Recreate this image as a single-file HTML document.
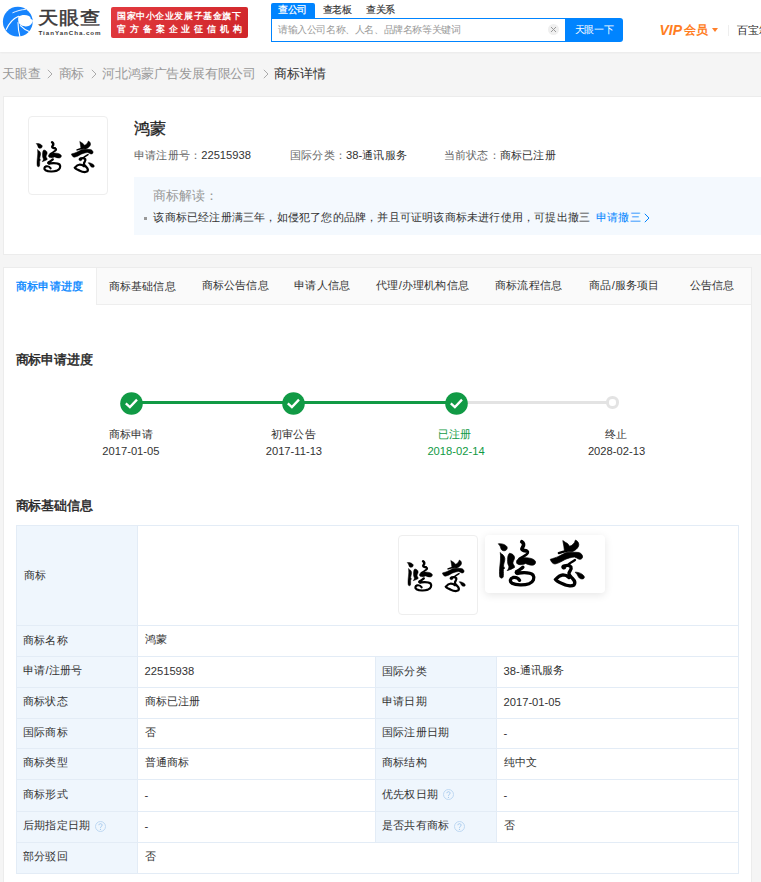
<!DOCTYPE html>
<html><head><meta charset="utf-8">
<style>
*{margin:0;padding:0;box-sizing:border-box}
html,body{width:761px;height:882px;overflow:hidden;background:#f5f5f5;font-family:"Liberation Sans",sans-serif;color:#333}
.abs{position:absolute}
#hdr{position:absolute;left:0;top:0;width:761px;height:52px;background:#fff;box-shadow:0 1px 2px rgba(0,0,0,.05)}
.t{position:absolute;white-space:nowrap;line-height:1}
</style></head><body>
<svg width="0" height="0" style="position:absolute">
<defs><g id="cal">
<g fill="#000" stroke="#000" stroke-width="0.7" stroke-linejoin="round">
<path d="M498.3,543.8 C501,543.4 505.5,544.2 507,546.8 C507.8,549 506.3,550.8 504,550.8 C501.8,550.7 501,549.3 500.8,548 C500.5,546.5 499.5,545 498.3,543.8Z"/>
<path d="M500.6,553.6 C502.5,554 504.6,556 504.8,558.5 C505,561 503.6,563.5 503.5,566 C503.5,567 504.3,567.5 504.7,568 L503.4,569.5 C503.3,572 503.7,575 503.2,577 C502.6,578.5 500.5,578.5 499.8,577 C499.2,574 499.5,569 500,565 C500.5,561 500.8,557 500.3,552.5Z"/>
<path d="M509.5,553.2 C512,553.5 514.8,555.2 514.5,558 C514.2,560.5 512.5,561.5 513,563.5 C513.5,565 515,566 514.5,567.5 C512.5,568.8 509.5,570 507.2,570.6 C508.5,569 509.5,567 508.5,565.5 C507.3,563.5 507.5,560 507.8,557 C508,555.5 508.5,554 509.5,553.2Z"/>
<path d="M516.5,561.5 C517,558.5 521,557.5 525,557.7 C529,557.8 534,558.5 535.5,561.5 C536,564 534,565.5 531.5,565.2 C529,565 527,564 525.5,563.5 C524,564.5 520.5,565 518.5,564.5 C517,564 516.3,563 516.5,561.5Z"/>
<circle cx="517.5" cy="572.3" r="2.4"/>
<circle cx="563.8" cy="567" r="2.2"/>
<path d="M562.8,540.6 C564.5,541.8 566,542.8 567.5,543.5 C568.3,544.2 568.8,545.3 569.5,546.3 C572,545.8 574.5,543.5 575.5,540 C578.2,541.2 579.3,543.8 578.6,546 C577.5,548.8 575,550.6 572,551.8 L564.5,551.5 C564.2,547.8 563.6,544.2 562.8,540.6Z"/>
<path d="M550.3,559.3 C553,558.5 556,557.5 558,556.7 C561,555.3 564,553.5 566.4,552.6 C570,552.2 575,552 578.8,552.5 C581.5,553.3 583,555.5 582.5,557.5 C582,559 580.5,559.5 579,559.2 C577.5,558.5 576,557.5 574.5,557 C571,557.2 567.5,558.5 565,559.5 C561.5,561.5 558,563.5 555,564 C552.5,564 551,561.5 550.3,559.3Z"/>
<path d="M575.2,572.2 C577.5,572 580.5,573 582.5,574.5 C584.5,576 585,577.8 583.5,578.7 C581.5,579.5 579.5,578.5 578.5,577 C577.8,575.5 576.8,573.5 575.2,572.2Z"/>
</g>
<g fill="none" stroke="#000" stroke-linecap="round">
<path d="M521.8,541.8 C523.5,543 524.5,545 522.5,547.5 C521,549.5 523,550.5 526,550.8" stroke-width="3.7"/>
<path d="M526,550.8 C528.5,551 528.5,553 526.5,554.5 C524.5,556 522,557 519.5,558.8" stroke-width="2.6"/>
<path d="M522.9,567.2 C521,569 518,570.5 516.5,572 C516,573 517,573.2 519,573 C524,572.5 530,572 533,575 C535,578 533.5,582 529,583.8 C524,585.5 516,585.2 512,583.2 C509.5,581.5 510,578.5 513,577.5 C516,577 518.5,578.5 519.6,580.3" stroke-width="3.3"/>
<path d="M558.8,553.1 C561,552.3 563.5,551.5 566.4,551.1" stroke-width="2.2"/>
<path d="M575,560 C572.5,561.5 570,563 568.4,564.6" stroke-width="2.2"/>
<path d="M563.5,566.8 C565.5,564.8 569.5,565 571,567 C572,569 569.5,571 569,573 C568.7,575 570.5,576.5 572.5,578.5 C574.5,580.5 575.5,583 574,585 C571.5,586.5 566,585.5 562,583.5 C558.5,582 556,580.5 555.5,579.5 C557.5,577 560.5,575 563,574.8 C565.5,574.8 567.5,576 569,577.5" stroke-width="3.3"/>
</g>
</g></defs>
</svg>
<div id="hdr"></div>
<svg class="abs" style="left:0px;top:0px" width="40" height="40" viewBox="0 0 40 40">
<circle cx="17.8" cy="21.7" r="14.9" fill="#1784fd"/>
<path d="M18.4,16.6 C21,14.8 25.5,14.2 29,16 C30.3,16.8 30.8,17.8 30.5,18.6 L33,20.6 C32.4,24.2 29.5,26.6 25.5,26.4 C23,26.2 21,25.4 20,24.6 C18.2,23 17.8,20 18.4,16.6Z" fill="#fff"/>
<g fill="none" stroke="#fff" stroke-linecap="round">
<path d="M6.2,29.6 C9,23.5 13,18.5 18.6,16.3" stroke-width="1.1"/>
<path d="M18,22.5 C18,28 18.8,32.5 20,36.8" stroke-width="1.1"/>
<path d="M20.4,25.6 C23,28.3 26,30.3 29.2,31.4" stroke-width="1.1"/>
<path d="M12.8,12.7 C17,10.9 21,9.7 25.5,9.4" stroke-width="0.9"/>
</g>
</svg>
<div class="abs" style="left:111px;top:7px;width:137px;height:31px;background:linear-gradient(135deg,#e23a3f,#cf2529);border-radius:2px"></div>
<div class="abs" style="left:271px;top:3px;width:44px;height:16px;background:#0084ff;border-radius:2px 2px 0 0"></div>
<div class="abs" style="left:271px;top:18px;width:296px;height:24px;border:1.5px solid #0084ff;border-right:0;background:#fff"></div>
<div class="abs" style="left:548px;top:24px;width:11px;height:11px;border-radius:50%;background:#efefef"></div>
<svg class="abs" style="left:550px;top:26px" width="7" height="7" viewBox="0 0 7 7"><path d="M1 1L6 6M6 1L1 6" stroke="#999" stroke-width="1"/></svg>
<div class="abs" style="left:565px;top:18px;width:58px;height:24px;background:#0084ff;border-radius:0 3px 3px 0"></div>
<div class="abs" style="left:712px;top:28px;width:0;height:0;border-left:3.5px solid transparent;border-right:3.5px solid transparent;border-top:4.5px solid #ff7f2a"></div>
<div class="abs" style="left:728px;top:25px;width:1px;height:11px;background:#eee"></div>
<div class="abs" style="left:3px;top:96px;width:758px;height:159px;background:#fff;border:1px solid #ececec;border-right:0"></div>
<div class="abs" style="left:28px;top:116px;width:80px;height:79px;border:1px solid #eee;border-radius:4px;background:#fff"></div>
<svg class="abs" style="left:33.84px;top:139.28px;overflow:visible" width="62.10" height="34.43" viewBox="495 537 92 51"><use href="#cal"/></svg>
<div class="abs" style="left:134px;top:177px;width:627px;height:58px;background:#f4f9fe"></div>
<div class="abs" style="left:144px;top:217px;width:3px;height:3px;background:#999"></div>
<svg class="abs" style="left:644px;top:213px" width="6" height="10" viewBox="0 0 6 10"><path d="M0.8 0.8 L5 5 L0.8 9.2" fill="none" stroke="#0084ff" stroke-width="1"/></svg>
<div class="abs" style="left:3px;top:267px;width:749px;height:615px;background:#fff;border:1px solid #ececec;border-bottom:0"></div>
<div class="abs" style="left:4px;top:268px;width:747px;height:37px;background:#fafafa;border-bottom:1px solid #eee"></div>
<div class="abs" style="left:4px;top:268px;width:93px;height:37px;background:#fff;border-right:1px solid #eee"></div>
<div class="abs" style="left:131px;top:401px;width:325px;height:3px;background:#119a45"></div>
<div class="abs" style="left:456px;top:401px;width:152px;height:3px;background:#e3e3e3"></div>
<svg class="abs" style="left:119.80000000000001px;top:392.3px" width="23" height="23" viewBox="0 0 23 23"><circle cx="11.5" cy="11.5" r="11.3" fill="#119a45"/><path d="M5.8 11.3 L9.9 15.1 L17 7.6" fill="none" stroke="#fff" stroke-width="2.3"/></svg>
<svg class="abs" style="left:281.9px;top:392.3px" width="23" height="23" viewBox="0 0 23 23"><circle cx="11.5" cy="11.5" r="11.3" fill="#119a45"/><path d="M5.8 11.3 L9.9 15.1 L17 7.6" fill="none" stroke="#fff" stroke-width="2.3"/></svg>
<svg class="abs" style="left:444.5px;top:392.3px" width="23" height="23" viewBox="0 0 23 23"><circle cx="11.5" cy="11.5" r="11.3" fill="#119a45"/><path d="M5.8 11.3 L9.9 15.1 L17 7.6" fill="none" stroke="#fff" stroke-width="2.3"/></svg>
<div class="abs" style="left:606.1999999999999px;top:396.2px;width:12.4px;height:12.4px;border-radius:50%;border:3px solid #e3e3e3;background:#fff"></div>
<div class="abs" style="left:16px;top:525px;width:723px;height:349px;border:1px solid #e3ecf6;background:#fff"></div>
<div class="abs" style="left:17px;top:526px;width:121px;height:347px;background:#eff6fd"></div>
<div class="abs" style="left:137px;top:525px;width:1px;height:349px;background:#e3ecf6"></div>
<div class="abs" style="left:398px;top:535px;width:80px;height:80px;border:1px solid #eee;border-radius:4px;background:#fff"></div>
<svg class="abs" style="left:404.64px;top:557.77px;overflow:visible" width="62.10" height="34.43" viewBox="495 537 92 51"><use href="#cal"/></svg>
<div class="abs" style="left:485px;top:535px;width:120px;height:58px;border-radius:4px;background:#fff;box-shadow:0 2px 8px rgba(0,0,0,.10)"></div>
<svg class="abs" style="left:495.00px;top:537.00px;overflow:visible" width="92.00" height="51.00" viewBox="495 537 92 51"><use href="#cal"/></svg>
<div class="abs" style="left:16px;top:625px;width:723px;height:1px;background:#e3ecf6"></div>
<div class="abs" style="left:16px;top:656px;width:723px;height:1px;background:#e3ecf6"></div>
<div class="abs" style="left:375px;top:657px;width:122px;height:30px;background:#eff6fd;border-left:1px solid #e3ecf6;border-right:1px solid #e3ecf6"></div>
<div class="abs" style="left:16px;top:687px;width:723px;height:1px;background:#e3ecf6"></div>
<div class="abs" style="left:375px;top:688px;width:122px;height:30px;background:#eff6fd;border-left:1px solid #e3ecf6;border-right:1px solid #e3ecf6"></div>
<div class="abs" style="left:16px;top:718px;width:723px;height:1px;background:#e3ecf6"></div>
<div class="abs" style="left:375px;top:719px;width:122px;height:29px;background:#eff6fd;border-left:1px solid #e3ecf6;border-right:1px solid #e3ecf6"></div>
<div class="abs" style="left:16px;top:748px;width:723px;height:1px;background:#e3ecf6"></div>
<div class="abs" style="left:375px;top:749px;width:122px;height:30px;background:#eff6fd;border-left:1px solid #e3ecf6;border-right:1px solid #e3ecf6"></div>
<div class="abs" style="left:16px;top:779px;width:723px;height:1px;background:#e3ecf6"></div>
<div class="abs" style="left:375px;top:780px;width:122px;height:31px;background:#eff6fd;border-left:1px solid #e3ecf6;border-right:1px solid #e3ecf6"></div>
<div class="abs" style="left:16px;top:811px;width:723px;height:1px;background:#e3ecf6"></div>
<div class="abs" style="left:375px;top:812px;width:122px;height:30px;background:#eff6fd;border-left:1px solid #e3ecf6;border-right:1px solid #e3ecf6"></div>
<div class="abs" style="left:16px;top:842px;width:723px;height:1px;background:#e3ecf6"></div>
<div class="t" id="logo" style="left:37.50px;top:8.60px;font-size:20.50px;color:#3a3637;-webkit-text-stroke:0.5px #3a3637;;transform:scaleY(0.88);transform-origin:0 0;letter-spacing:0.000px">天眼查</div>
<div class="t" id="logo2" style="left:38.50px;top:29.50px;font-size:6.20px;color:#3a3637;font-weight:bold;;letter-spacing:1.150px"><span style="letter-spacing:0.950px;position:relative;top:0px">TianYanCha.com</span></div>
<div class="t" id="red1" style="left:117.00px;top:11.60px;font-size:9.20px;color:#fff;font-weight:bold;;letter-spacing:0.580px">国家中小企业发展子基金旗下</div>
<div class="t" id="red2" style="left:117.00px;top:25.15px;font-size:9.20px;color:#fff;font-weight:bold;;letter-spacing:3.900px">官方备案企业征信机构</div>
<div class="t" id="tab1" style="left:278.00px;top:4.50px;font-size:9.60px;color:#fff;-webkit-text-stroke:0.25px #fff;letter-spacing:-0.400px">查公司</div>
<div class="t" id="tab2" style="left:322.50px;top:4.90px;font-size:9.60px;color:#333;-webkit-text-stroke:0.15px #333;letter-spacing:-0.400px">查老板</div>
<div class="t" id="tab3" style="left:366.00px;top:4.90px;font-size:9.60px;color:#333;-webkit-text-stroke:0.15px #333;letter-spacing:-0.400px">查关系</div>
<div class="t" id="ph" style="left:278.00px;top:24.80px;font-size:9.60px;color:#999;letter-spacing:-0.400px">请输入公司名称、人名、品牌名称等关键词</div>
<div class="t" id="btn" style="left:574.50px;top:24.50px;font-size:10.00px;color:#fff;letter-spacing:-0.3px">天眼一下</div>
<div class="t" id="vip" style="left:659.50px;top:22.15px;font-size:11.60px;color:#ff7d22;font-weight:bold;letter-spacing:-0.400px"><span style="font-style:italic;font-size:14px;letter-spacing:-0.3px"><span style="letter-spacing:0.000px;position:relative;top:1.2px">VIP</span></span><span style="margin-left:2px">会员</span></div>
<div class="t" id="bao" style="left:737.00px;top:25.00px;font-size:11.20px;color:#222;letter-spacing:0.200px">百宝箱</div>
<div class="t" id="bc" style="left:2.10px;top:68.00px;font-size:12.80px;color:#999;letter-spacing:-0.200px">天眼查<svg width="6" height="10" viewBox="0 0 6 10" style="margin:0 5.7px 0 6.5px;vertical-align:-1px"><path d="M0.8 0.8 L5 5 L0.8 9.2" fill="none" stroke="#aaa" stroke-width="1"/></svg>商标<svg width="6" height="10" viewBox="0 0 6 10" style="margin:0 5.7px 0 6.5px;vertical-align:-1px"><path d="M0.8 0.8 L5 5 L0.8 9.2" fill="none" stroke="#aaa" stroke-width="1"/></svg>河北鸿蒙广告发展有限公司<svg width="6" height="10" viewBox="0 0 6 10" style="margin:0 5.7px 0 6.5px;vertical-align:-1px"><path d="M0.8 0.8 L5 5 L0.8 9.2" fill="none" stroke="#aaa" stroke-width="1"/></svg><span style="color:#333">商标详情</span></div>
<div class="t" id="title" style="left:134.00px;top:120.70px;font-size:16.00px;color:#222;-webkit-text-stroke:0.3px #222">鸿蒙</div>
<div class="t" id="i1" style="left:134.00px;top:150.00px;font-size:11.20px;color:#666;letter-spacing:0.200px">申请注册号：<span style="color:#333"><span style="letter-spacing:0.000px;position:relative;top:0.2px">22515938</span></span></div>
<div class="t" id="i2" style="left:290.00px;top:150.00px;font-size:11.20px;color:#666;letter-spacing:0.200px">国际分类：<span style="color:#333"><span style="letter-spacing:0.000px;position:relative;top:0.2px">38-</span>通讯服务</span></div>
<div class="t" id="i3" style="left:443.80px;top:150.00px;font-size:11.20px;color:#666;letter-spacing:0.200px">当前状态：<span style="color:#333">商标已注册</span></div>
<div class="t" id="jd" style="left:153.40px;top:189.60px;font-size:12.80px;color:#999;letter-spacing:-0.200px">商标解读：</div>
<div class="t" id="bul" style="left:153.40px;top:212.45px;font-size:11.20px;color:#333;letter-spacing:0.200px">该商标已经注册满三年，如侵犯了您的品牌，并且可证明该商标未进行使用，可提出撤三</div>
<div class="t" id="link" style="left:596.00px;top:212.00px;font-size:11.20px;color:#0084ff;letter-spacing:0.200px">申请撤三</div>
<div class="t" id="tb0" style="left:16.00px;top:281.00px;font-size:11.20px;color:#0084ff;-webkit-text-stroke:0.3px #0084ff;letter-spacing:0.200px">商标申请进度</div>
<div class="t" id="tb1" style="left:108.70px;top:280.65px;font-size:11.20px;color:#333;letter-spacing:0.200px">商标基础信息</div>
<div class="t" id="tb2" style="left:201.70px;top:280.00px;font-size:11.20px;color:#333;letter-spacing:0.200px">商标公告信息</div>
<div class="t" id="tb3" style="left:294.30px;top:280.00px;font-size:11.20px;color:#333;letter-spacing:0.200px">申请人信息</div>
<div class="t" id="tb4" style="left:376.30px;top:280.00px;font-size:11.20px;color:#333;letter-spacing:0.200px">代理<span style="letter-spacing:0.000px;position:relative;top:0px">/</span>办理机构信息</div>
<div class="t" id="tb5" style="left:495.00px;top:280.00px;font-size:11.20px;color:#333;letter-spacing:0.200px">商标流程信息</div>
<div class="t" id="tb6" style="left:589.30px;top:280.00px;font-size:11.20px;color:#333;letter-spacing:0.200px">商品<span style="letter-spacing:0.000px;position:relative;top:0px">/</span>服务项目</div>
<div class="t" id="tb7" style="left:689.80px;top:280.00px;font-size:11.20px;color:#333;letter-spacing:0.200px">公告信息</div>
<div class="t" id="h1" style="left:15.50px;top:354.45px;font-size:12.80px;color:#262626;-webkit-text-stroke:0.45px #262626;letter-spacing:-0.200px">商标申请进度</div>
<div class="t" id="tl0" style="left:71.30px;top:429.00px;font-size:11.20px;color:#333;width:120px;text-align:center;letter-spacing:0.200px">商标申请</div>
<div class="t" id="td0" style="left:70.90px;top:446.00px;font-size:11.20px;color:#333;width:120px;text-align:center;letter-spacing:0.200px"><span style="letter-spacing:0.000px;position:relative;top:0px">2017-01-05</span></div>
<div class="t" id="tl1" style="left:233.40px;top:429.00px;font-size:11.20px;color:#333;width:120px;text-align:center;letter-spacing:0.200px">初审公告</div>
<div class="t" id="td1" style="left:233.90px;top:446.00px;font-size:11.20px;color:#333;width:120px;text-align:center;letter-spacing:0.200px"><span style="letter-spacing:0.000px;position:relative;top:0px">2017-11-13</span></div>
<div class="t" id="tl2" style="left:394.70px;top:429.00px;font-size:11.20px;color:#119a45;width:120px;text-align:center;letter-spacing:0.200px">已注册</div>
<div class="t" id="td2" style="left:396.00px;top:446.00px;font-size:11.20px;color:#119a45;width:120px;text-align:center;letter-spacing:0.200px"><span style="letter-spacing:0.000px;position:relative;top:0px">2018-02-14</span></div>
<div class="t" id="tl3" style="left:555.90px;top:429.00px;font-size:11.20px;color:#333;width:120px;text-align:center;letter-spacing:0.200px">终止</div>
<div class="t" id="td3" style="left:556.50px;top:446.00px;font-size:11.20px;color:#333;width:120px;text-align:center;letter-spacing:0.200px"><span style="letter-spacing:0.000px;position:relative;top:0px">2028-02-13</span></div>
<div class="t" id="h2" style="left:15.50px;top:499.75px;font-size:12.80px;color:#262626;-webkit-text-stroke:0.45px #262626;letter-spacing:-0.200px">商标基础信息</div>
<div class="t" id="tk" style="left:23.50px;top:569.50px;font-size:11.20px;;letter-spacing:0.200px">商标</div>
<div class="t" id="l0" style="left:23.00px;top:634.90px;font-size:11.20px;;letter-spacing:0.200px">商标名称</div>
<div class="t" id="v0" style="left:144.50px;top:634.30px;font-size:11.20px;;letter-spacing:0.200px">鸿蒙</div>
<div class="t" id="l1" style="left:23.00px;top:665.30px;font-size:11.20px;;letter-spacing:0.200px">申请<span style="letter-spacing:0.000px;position:relative;top:0px">/</span>注册号</div>
<div class="t" id="v1" style="left:144.50px;top:665.30px;font-size:11.20px;;letter-spacing:0.200px"><span style="letter-spacing:0.000px;position:relative;top:1.2px">22515938</span></div>
<div class="t" id="m1" style="left:382.00px;top:666.30px;font-size:11.20px;;letter-spacing:0.200px">国际分类</div>
<div class="t" id="w1" style="left:503.50px;top:665.30px;font-size:11.20px;;letter-spacing:0.200px"><span style="letter-spacing:0.000px;position:relative;top:1.2px">38-</span>通讯服务</div>
<div class="t" id="l2" style="left:23.00px;top:696.30px;font-size:11.20px;;letter-spacing:0.200px">商标状态</div>
<div class="t" id="v2" style="left:144.50px;top:696.30px;font-size:11.20px;;letter-spacing:0.200px">商标已注册</div>
<div class="t" id="m2" style="left:382.00px;top:696.30px;font-size:11.20px;;letter-spacing:0.200px">申请日期</div>
<div class="t" id="w2" style="left:503.50px;top:696.30px;font-size:11.20px;;letter-spacing:0.200px"><span style="letter-spacing:0.000px;position:relative;top:1.2px">2017-01-05</span></div>
<div class="t" id="l3" style="left:23.00px;top:726.80px;font-size:11.20px;;letter-spacing:0.200px">国际商标</div>
<div class="t" id="v3" style="left:144.50px;top:726.80px;font-size:11.20px;;letter-spacing:0.200px">否</div>
<div class="t" id="m3" style="left:382.00px;top:726.80px;font-size:11.20px;;letter-spacing:0.200px">国际注册日期</div>
<div class="t" id="w3" style="left:503.50px;top:726.80px;font-size:11.20px;;letter-spacing:0.200px"><span style="letter-spacing:0.000px;position:relative;top:1.2px">-</span></div>
<div class="t" id="l4" style="left:23.00px;top:757.30px;font-size:11.20px;;letter-spacing:0.200px">商标类型</div>
<div class="t" id="v4" style="left:144.50px;top:757.30px;font-size:11.20px;;letter-spacing:0.200px">普通商标</div>
<div class="t" id="m4" style="left:382.00px;top:757.30px;font-size:11.20px;;letter-spacing:0.200px">商标结构</div>
<div class="t" id="w4" style="left:503.50px;top:757.30px;font-size:11.20px;;letter-spacing:0.200px">纯中文</div>
<div class="t" id="l5" style="left:23.00px;top:788.80px;font-size:11.20px;;letter-spacing:0.200px">商标形式</div>
<div class="t" id="v5" style="left:144.50px;top:788.80px;font-size:11.20px;;letter-spacing:0.200px"><span style="letter-spacing:0.000px;position:relative;top:1.2px">-</span></div>
<div class="t" id="m5" style="left:382.00px;top:788.80px;font-size:11.20px;;letter-spacing:0.200px">优先权日期<svg width="11" height="11" viewBox="0 0 11 11" style="vertical-align:-2.5px;margin-left:5px"><circle cx="5.5" cy="5.5" r="5" fill="none" stroke="#b9d5f1" stroke-width="0.9"/><path d="M3.9 4.2 C3.9 2.2 7.1 2.2 7.1 4.2 C7.1 5.4 5.5 5.4 5.5 6.8" fill="none" stroke="#9cc4ec" stroke-width="0.9"/><circle cx="5.5" cy="8.3" r="0.6" fill="#9cc4ec"/></svg></div>
<div class="t" id="w5" style="left:503.50px;top:788.80px;font-size:11.20px;;letter-spacing:0.200px"><span style="letter-spacing:0.000px;position:relative;top:1.2px">-</span></div>
<div class="t" id="l6" style="left:23.00px;top:820.30px;font-size:11.20px;;letter-spacing:0.200px">后期指定日期<svg width="11" height="11" viewBox="0 0 11 11" style="vertical-align:-2.5px;margin-left:5px"><circle cx="5.5" cy="5.5" r="5" fill="none" stroke="#b9d5f1" stroke-width="0.9"/><path d="M3.9 4.2 C3.9 2.2 7.1 2.2 7.1 4.2 C7.1 5.4 5.5 5.4 5.5 6.8" fill="none" stroke="#9cc4ec" stroke-width="0.9"/><circle cx="5.5" cy="8.3" r="0.6" fill="#9cc4ec"/></svg></div>
<div class="t" id="v6" style="left:144.50px;top:820.30px;font-size:11.20px;;letter-spacing:0.200px"><span style="letter-spacing:0.000px;position:relative;top:1.2px">-</span></div>
<div class="t" id="m6" style="left:382.00px;top:820.30px;font-size:11.20px;;letter-spacing:0.200px">是否共有商标<svg width="11" height="11" viewBox="0 0 11 11" style="vertical-align:-2.5px;margin-left:5px"><circle cx="5.5" cy="5.5" r="5" fill="none" stroke="#b9d5f1" stroke-width="0.9"/><path d="M3.9 4.2 C3.9 2.2 7.1 2.2 7.1 4.2 C7.1 5.4 5.5 5.4 5.5 6.8" fill="none" stroke="#9cc4ec" stroke-width="0.9"/><circle cx="5.5" cy="8.3" r="0.6" fill="#9cc4ec"/></svg></div>
<div class="t" id="w6" style="left:503.50px;top:820.30px;font-size:11.20px;;letter-spacing:0.200px">否</div>
<div class="t" id="l7" style="left:23.00px;top:851.30px;font-size:11.20px;;letter-spacing:0.200px">部分驳回</div>
<div class="t" id="v7" style="left:144.50px;top:851.30px;font-size:11.20px;;letter-spacing:0.200px">否</div>
</body></html>
